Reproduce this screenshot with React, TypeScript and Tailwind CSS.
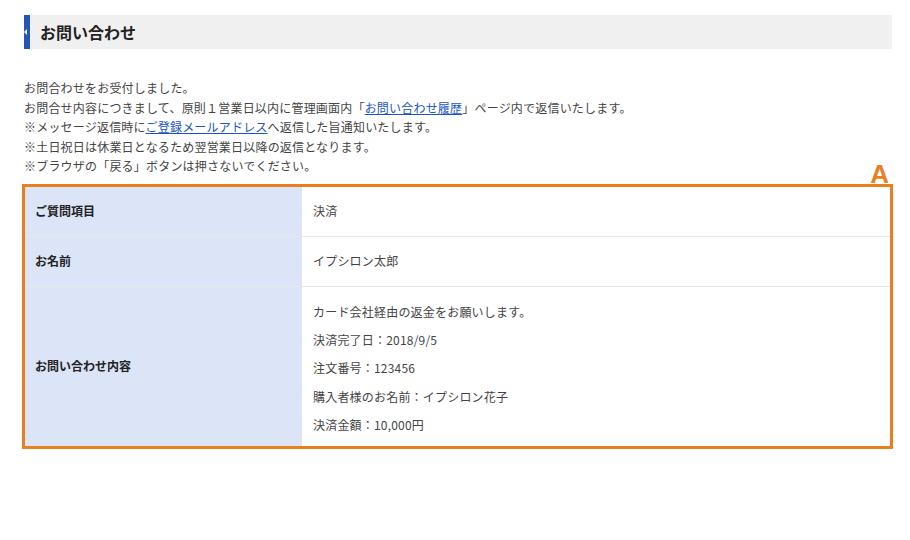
const font = { fontFamily: '"Noto Sans CJK JP", "Noto Sans", sans-serif' };

const rows: { label: string; lines: string[] }[] = [
  { label: "ご質問項目", lines: ["決済"] },
  { label: "お名前", lines: ["イプシロン太郎"] },
  {
    label: "お問い合わせ内容",
    lines: [
      "カード会社経由の返金をお願いします。",
      "決済完了日：2018/9/5",
      "注文番号：123456",
      "購入者様のお名前：イプシロン花子",
      "決済金額：10,000円",
    ],
  },
];

export default function App() {
  return (
    <div className="w-[910px] h-[540px] bg-white text-[#333]" style={font}>
      <div className="pl-[24px] pr-[18px] pt-[15px]">
        {/* Page title */}
        <div className="relative flex items-center h-[34px] bg-[#f0f0f0] border-l-[6px] border-[#2456b8]">
          <span className="absolute -left-[6px] top-[14px] w-0 h-0 border-y-[3px] border-y-transparent border-r-[3px] border-r-white" />
          <h1 className="pl-[10px] text-[16px] font-bold text-[#222] leading-none">お問い合わせ</h1>
        </div>

        {/* Message */}
        <div className="mt-[29px] text-[12px] leading-[19.6px] tracking-[0.2px] text-[#444]">
          <p>お問合わせをお受付しました。</p>
          <p>
            お問合せ内容につきまして、原則１営業日以内に管理画面内「
            <a className="text-[#1a55c4] underline">お問い合わせ履歴</a>
            」ページ内で返信いたします。
          </p>
          <p>
            ※メッセージ返信時に
            <a className="text-[#1a55c4] underline">ご登録メールアドレス</a>
            へ返信した旨通知いたします。
          </p>
          <p>※土日祝日は休業日となるため翌営業日以降の返信となります。</p>
          <p>※ブラウザの「戻る」ボタンは押さないでください。</p>
        </div>
      </div>

      {/* Highlighted table */}
      <div className="pl-[22px] pr-[17px]">
        <div className="flex justify-end pr-[4px] -mt-[12px] h-[20px]">
          <span
            className="text-[26px] font-bold leading-[20px] text-[#e8801e]"
            style={{ fontFamily: '"Liberation Sans", Arial, sans-serif' }}
          >
            A
          </span>
        </div>
        <div className="border-[3px] border-[#e8801e]">
          {rows.map((r, i) => (
            <div
              key={r.label}
              className={`flex text-[12px] ${i < rows.length - 1 ? "border-b border-[#e8e8e8]" : ""}`}
            >
              <div className="w-[277px] shrink-0 bg-[#dce4f7] flex items-center pl-[10px] font-bold text-[#222]">
                {r.label}
              </div>
              <div
                className={`flex-1 pl-[11px] tracking-[0.2px] ${
                  r.lines.length > 1 ? "pt-[15px] pb-[11px] flex flex-col gap-[8.2px]" : "h-[49px] flex items-center"
                } text-[#444]`}
              >
                {r.lines.map((l) => (
                  <p key={l} className="leading-[20px]">
                    {l}
                  </p>
                ))}
              </div>
            </div>
          ))}
        </div>
      </div>
    </div>
  );
}
